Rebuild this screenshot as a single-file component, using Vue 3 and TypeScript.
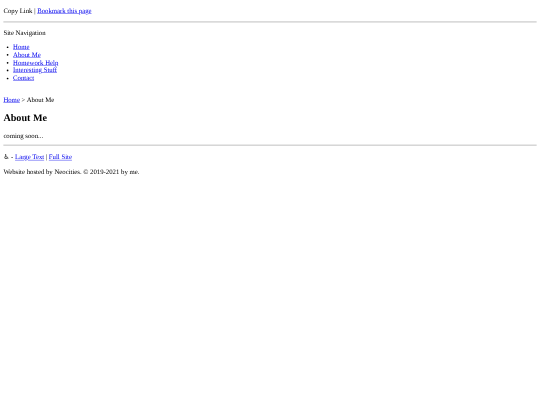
<script setup lang="ts">
const links: string[] = ['Home', 'About Me', 'Homework Help', 'Interesting Stuff', 'Contact']
</script>

<template>
  <div class="frame">
    <div class="page">
      <p>Copy Link | <a href="#">Bookmark this page</a></p>
      <hr />
      <p>Site Navigation</p>
      <ul>
        <li v-for="l in links" :key="l"><a href="#">{{ l }}</a></li>
      </ul>
      <p class="crumbs"><a href="#">Home</a> &gt; About Me</p>
      <h2>About Me</h2>
      <p class="soon">coming soon...</p>
      <hr class="rule-low" />
      <p><span class="access">♿&#xFE0E;</span> - <a href="#">Large Text</a> | <a href="#">Full Site</a></p>
      <p class="host">Website hosted by Neocities. © 2019-2021 by me.</p>
    </div>
  </div>
</template>

<style scoped>
.frame {
  width: 540px;
  height: 405px;
  overflow: hidden;
}
.page {
  font-family: "Liberation Serif", "Times New Roman", serif;
  font-size: 16px;
  line-height: 18px;
  color: #000;
  width: 1280px;
  box-sizing: border-box;
  padding: 1px 8px 0;
  transform: scale(0.421875);
  transform-origin: 0 0;
  filter: blur(0.7px);
  text-rendering: geometricPrecision;
}
p { margin: 16px 0; }
.crumbs { margin-top: 33px; }
.soon { margin-bottom: 12px; }
.host { margin-top: 12px; }
hr {
  margin: 16px 0;
  height: 2px;
  border: 0;
  background: #b4b4b4;
}
.rule-low { margin-top: 12px; margin-bottom: 19px; }
ul { margin: 16px 0; padding-left: 23px; line-height: 18.4px; }
h2 { font-size: 24px; line-height: 27.6px; margin: 20px 0 19px; }
a { color: #00e; }
.access { font-family: "DejaVu Sans", sans-serif; }
</style>

<style>
html, body { background: #fff; margin: 0; }
</style>
